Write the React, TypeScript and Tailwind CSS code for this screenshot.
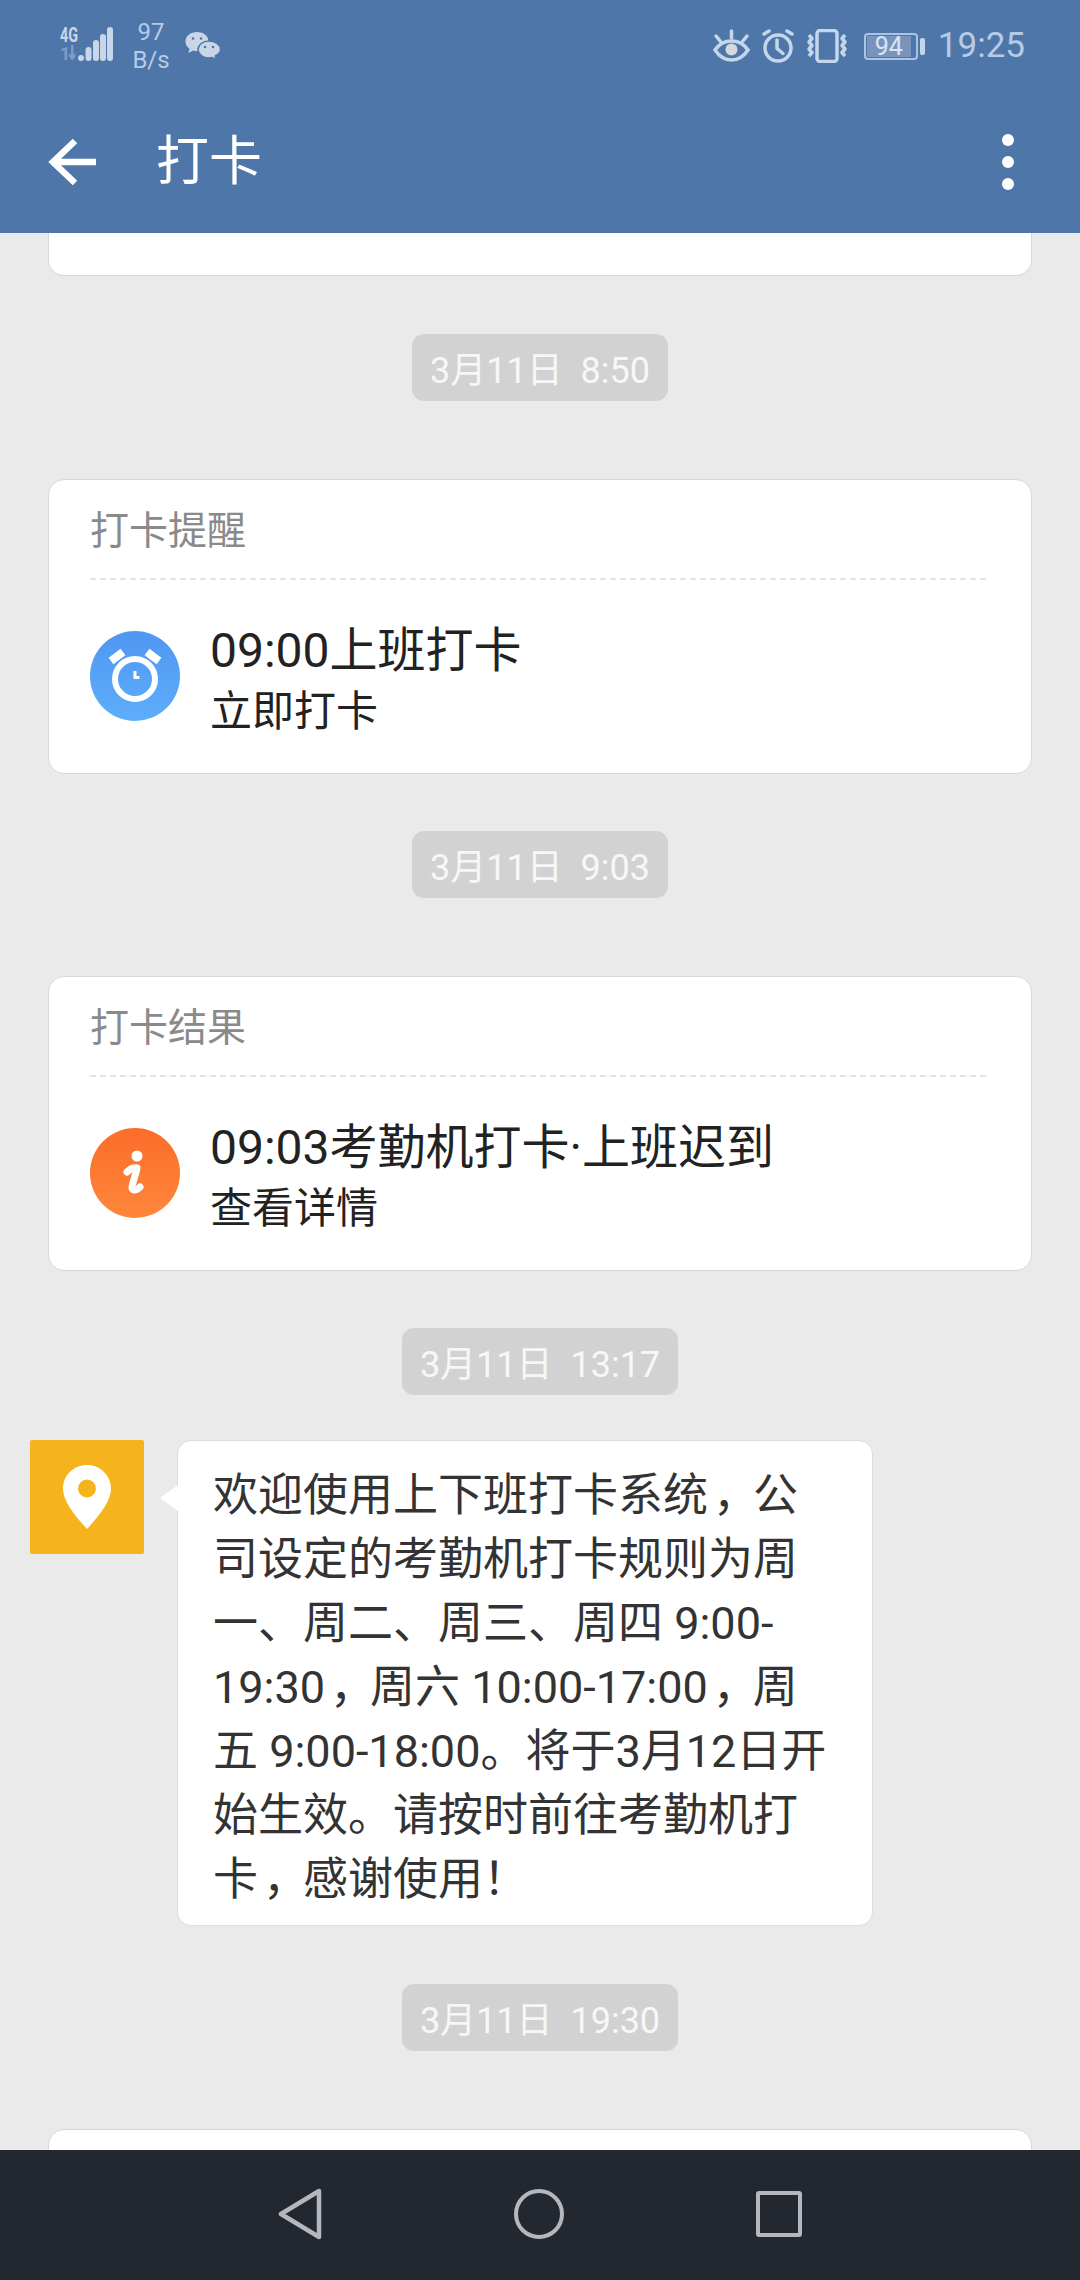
import { useId } from "react";

const CJK = "font-['Roboto','Noto_Sans_CJK_SC',sans-serif]";

function SignalIcon() {
  return (
    <svg width="56" height="36" viewBox="0 0 56 36" fill="#c9d6e8" className="overflow-visible" aria-hidden>
      <text x="1" y="15" fontSize="20" fontWeight="700" fontFamily="Roboto, sans-serif" textLength="18" lengthAdjust="spacingAndGlyphs">4G</text>
      <g opacity="0.4">
        <text x="1" y="33" fontSize="18" fontWeight="700" fontFamily="Roboto, sans-serif">1</text>
        <path d="M12 18h2.500v10l2-2v3.500l-3.250 4-3.250-4V26l2 2z" />
      </g>
      <rect x="19" y="28" width="6" height="6" rx="3" />
      <rect x="26.500" y="20" width="6" height="14" rx="3" />
      <rect x="34" y="13" width="6" height="21" rx="3" />
      <rect x="41" y="7" width="6" height="27" rx="3" />
      <rect x="48" y="0" width="6" height="34" rx="3" />
    </svg>
  );
}

function WechatIcon() {
  return (
    <svg width="36" height="30" viewBox="0 0 36 30" aria-hidden>
      <path d="M12 1C5.500 1 .5 5 .5 10.500c0 3 1.700 5.600 4 7.300L3.500 22l4.500-2.400c1.500.4 3 .6 4.500.6 6 0 11-4.200 11-9.700C23.500 5 18.500 1 12 1z" fill="#c9d6e8" />
      <path d="M24 10c-6 0-11 3.800-11 8.500S18 27 24 27c1.200 0 2.300-.2 3.400-.5L31 29l-.8-4c3-1.500 5.300-3.800 5.300-6.500C35.500 13.800 30 10 24 10z" fill="#c9d6e8" stroke="#4f76a9" strokeWidth="1.500" />
      <circle cx="8" cy="7.500" r="1.300" fill="#4f76a9" />
      <circle cx="16" cy="7.500" r="1.300" fill="#4f76a9" />
      <circle cx="20" cy="16" r="1.300" fill="#4f76a9" />
      <circle cx="28" cy="16" r="1.300" fill="#4f76a9" />
    </svg>
  );
}

function EyeIcon() {
  return (
    <svg width="37" height="34" viewBox="0 0 37 34" fill="none" stroke="#c3d6ec" strokeWidth="3.500" strokeLinecap="round" aria-hidden>
      <path d="M2 21c4-6 10-9 16.500-9S31 15 35 21c-4 6-10 10-16.500 10S6 27 2 21z" />
      <circle cx="18.500" cy="20.500" r="6" fill="#d5d9de" stroke="none" />
      <path d="M18.500 2v7M3 7l5 6M34 7l-5 6" />
    </svg>
  );
}

function AlarmIcon() {
  return (
    <svg width="34" height="34" viewBox="0 0 34 34" fill="none" stroke="#c3d6ec" strokeWidth="3.500" strokeLinecap="round" aria-hidden>
      <circle cx="17" cy="19" r="13" />
      <path d="M16 11v8.500l6 5M3 5l5-3M31 5l-5-3" />
    </svg>
  );
}

function VibrateIcon() {
  return (
    <svg width="42" height="34" viewBox="0 0 42 34" fill="none" stroke="#c3d6ec" strokeWidth="3.500" strokeLinejoin="round" aria-hidden>
      <rect x="11" y="1.500" width="20" height="31" rx="3" />
      <path d="M3 6l3 3.500-3 3.500 3 3.500-3 3.500 3 3.500-3 3.500" />
      <path d="M39 6l-3 3.500 3 3.500-3 3.500 3 3.500-3 3.500 3 3.500" />
    </svg>
  );
}

function Battery() {
  return (
    <div className="flex items-center gap-[2px]">
      <div className="flex h-[27px] w-[54px] items-center rounded-[4px] border-2 border-[#a9c4e4] p-[1px]">
        <div className="flex h-full w-[44px] items-center justify-center bg-[#7894bb] text-[25px] leading-none text-[#dbe5f1]">
          94
        </div>
      </div>
      <div className="h-[17px] w-[5px] rounded-[2px] bg-[#c3d6ec]" />
    </div>
  );
}

function StatusBar() {
  return (
    <div className="flex h-[90px] items-start pr-[55px] pl-[59px] pt-[18px] font-['Roboto',sans-serif]">
      <div className="mt-[9px]"><SignalIcon /></div>
      <div className="ml-[17px] flex w-[38px] flex-col items-center text-[24px] leading-[28px] text-[#b6cbe6]">
        <span>97</span>
        <span>B/s</span>
      </div>
      <div className="ml-[15px] mt-[13px]"><WechatIcon /></div>
      <div className="ml-auto flex items-center pt-[11px]">
        <EyeIcon />
        <div className="ml-[11px]"><AlarmIcon /></div>
        <div className="ml-[11px]"><VibrateIcon /></div>
        <div className="ml-[16px]"><Battery /></div>
        <span className="ml-[13px] text-[35px] leading-[34px] text-[#b6cbe6]">19:25</span>
      </div>
    </div>
  );
}

function Toolbar() {
  return (
    <div className="flex h-[143px] items-center pl-[48px] pr-[66px]">
      <svg width="48" height="48" viewBox="0 0 48 48" fill="none" stroke="#fff" strokeWidth="6.500" aria-hidden>
        <path d="M48 24H5M27 3L5 24l22 21" />
      </svg>
      <span className={`ml-[60px] text-[53px] leading-[70px] text-white ${CJK}`}>打卡</span>
      <div className="ml-auto flex flex-col gap-[10px]">
        <div className="h-[12px] w-[12px] rounded-full bg-white" />
        <div className="h-[12px] w-[12px] rounded-full bg-white" />
        <div className="h-[12px] w-[12px] rounded-full bg-white" />
      </div>
    </div>
  );
}

function TimePill({ children }: { children: string }) {
  return (
    <div className="flex justify-center">
      <div className={`flex h-[67px] items-center rounded-[12px] bg-[#d2d2d2] px-[18px] pt-[6px] text-[36px] whitespace-pre text-[#f7f7f7] ${CJK}`}>
        {children}
      </div>
    </div>
  );
}

function ClockBadge() {
  const id = useId();
  return (
    <svg width="90" height="90" viewBox="0 0 90 90" className="mb-[6px] shrink-0" aria-hidden>
      <defs>
        <linearGradient id={id} x1="0" y1="0" x2="0" y2="1">
          <stop offset="0" stopColor="#4f97f2" />
          <stop offset="1" stopColor="#5eadfb" />
        </linearGradient>
      </defs>
      <circle cx="45" cy="45" r="45" fill={`url(#${id})`} />
      <circle cx="45" cy="48" r="20" fill="none" stroke="#fff" strokeWidth="6" />
      <path d="M45 40v6.500h4.500" fill="none" stroke="#fff" strokeWidth="3" />
      <path d="M21 30l12-9M69 30l-12-9" fill="none" stroke="#fff" strokeWidth="8" />
    </svg>
  );
}

function InfoBadge() {
  const id = useId();
  return (
    <svg width="90" height="90" viewBox="0 0 90 90" className="mb-[6px] shrink-0" aria-hidden>
      <defs>
        <linearGradient id={id} x1="0" y1="0" x2="0" y2="1">
          <stop offset="0" stopColor="#fb6d2a" />
          <stop offset="1" stopColor="#fd873b" />
        </linearGradient>
      </defs>
      <circle cx="45" cy="45" r="45" fill={`url(#${id})`} />
      <circle cx="47" cy="28" r="5.500" fill="#fff" />
      <path d="M37 44c3-3 7-4.500 10-4-1 6-4 13-5 19-.5 4 4 4 8 0" fill="none" stroke="#fff" strokeWidth="7" strokeLinecap="round" strokeLinejoin="round" />
    </svg>
  );
}

function NoticeCard({ title, line, sub, icon }: { title: string; line: string; sub: string; icon: React.ReactNode }) {
  return (
    <div className={`mx-[48px] h-[295px] rounded-[16px] border border-[#d8d8d8] bg-white pl-[41px] pr-[45px] ${CJK}`}>
      <div className="flex h-[100px] items-center border-b-2 border-dashed border-[#e3e3e3] pt-[4px] text-[39px] text-[#8a8a8a]">
        {title}
      </div>
      <div className="mt-[38px] flex items-center">
        {icon}
        <div className="ml-[30px] text-[#222]">
          <div className="text-[48px] leading-[66px]">{line}</div>
          <div className="text-[42px] leading-[56px]">{sub}</div>
        </div>
      </div>
    </div>
  );
}

function Comma() {
  return <span className="relative left-[5px]">，</span>;
}

function MessageRow() {
  return (
    <div className="flex items-start pl-[30px]">
      <div className="flex h-[114px] w-[114px] shrink-0 items-center justify-center rounded-[2px] bg-[#f6b41c]">
        <svg width="48" height="64" viewBox="0 0 48 64" aria-hidden>
          <path fillRule="evenodd" fill="#fff" d="M24 0C10.700 0 0 10.500 0 23.500 0 37 13 52 24 64c11-12 24-27 24-40.500C48 10.500 37.300 0 24 0zm0 14.500a9 9 0 1 1 0 18 9 9 0 0 1 0-18z" />
        </svg>
      </div>
      <div className="relative ml-[33px] w-[696px] rounded-[14px] border border-[#dcdcdc] bg-white pt-[23px] pb-[13px] pl-[35px] pr-[30px]">
        <div className="absolute top-[44px] left-[-18px] h-0 w-0 border-y-[13px] border-r-[18px] border-y-transparent border-r-white" />
        <p className={`text-[45px] leading-[64px] text-[#333] ${CJK}`}>
          欢迎使用上下班打卡系统<Comma />公司设定的考勤机打卡规则为周一、周二、周三、周四 9:00-19:30<Comma />周六 10:00-17:00<Comma />周五 9:00-18:00。将于3月12日开始生效。请按时前往考勤机打卡<Comma />感谢使用！
        </p>
      </div>
    </div>
  );
}

function NavBar() {
  return (
    <div className="flex h-[130px] shrink-0 items-center justify-center bg-[#232730] pb-[2px]">
      <div className="flex w-[524px] items-center justify-between">
        <svg width="44" height="52" viewBox="0 0 44 52" fill="none" stroke="#b4b7bb" strokeWidth="4.500" strokeLinejoin="round" aria-hidden>
          <path d="M41 3v46L3 26z" />
        </svg>
        <svg width="50" height="50" viewBox="0 0 50 50" fill="none" stroke="#b4b7bb" strokeWidth="4" aria-hidden>
          <circle cx="25" cy="25" r="23" />
        </svg>
        <div className="h-[46px] w-[46px] rounded-[3px] border-[4px] border-[#b4b7bb]" />
      </div>
    </div>
  );
}

export default function App() {
  return (
    <div className="flex h-[2280px] w-[1080px] flex-col overflow-hidden bg-[#eaeaea]">
      <header className="h-[233px] shrink-0 bg-[#4f76a9]">
        <StatusBar />
        <Toolbar />
      </header>
      <main className="min-h-0 flex-1 overflow-hidden">
        <div className="mx-[48px] h-[43px] rounded-b-[16px] border border-t-0 border-[#d8d8d8] bg-white" />
        <div className="mt-[58px]"><TimePill>3月11日  8:50</TimePill></div>
        <div className="mt-[78px]">
          <NoticeCard title="打卡提醒" line="09:00上班打卡" sub="立即打卡" icon={<ClockBadge />} />
        </div>
        <div className="mt-[57px]"><TimePill>3月11日  9:03</TimePill></div>
        <div className="mt-[78px]">
          <NoticeCard title="打卡结果" line="09:03考勤机打卡·上班迟到" sub="查看详情" icon={<InfoBadge />} />
        </div>
        <div className="mt-[57px]"><TimePill>3月11日  13:17</TimePill></div>
        <div className="mt-[45px]"><MessageRow /></div>
        <div className="mt-[58px]"><TimePill>3月11日  19:30</TimePill></div>
        <div className="mx-[48px] mt-[78px] h-[60px] rounded-t-[16px] border border-[#d8d8d8] bg-white" />
      </main>
      <NavBar />
    </div>
  );
}
